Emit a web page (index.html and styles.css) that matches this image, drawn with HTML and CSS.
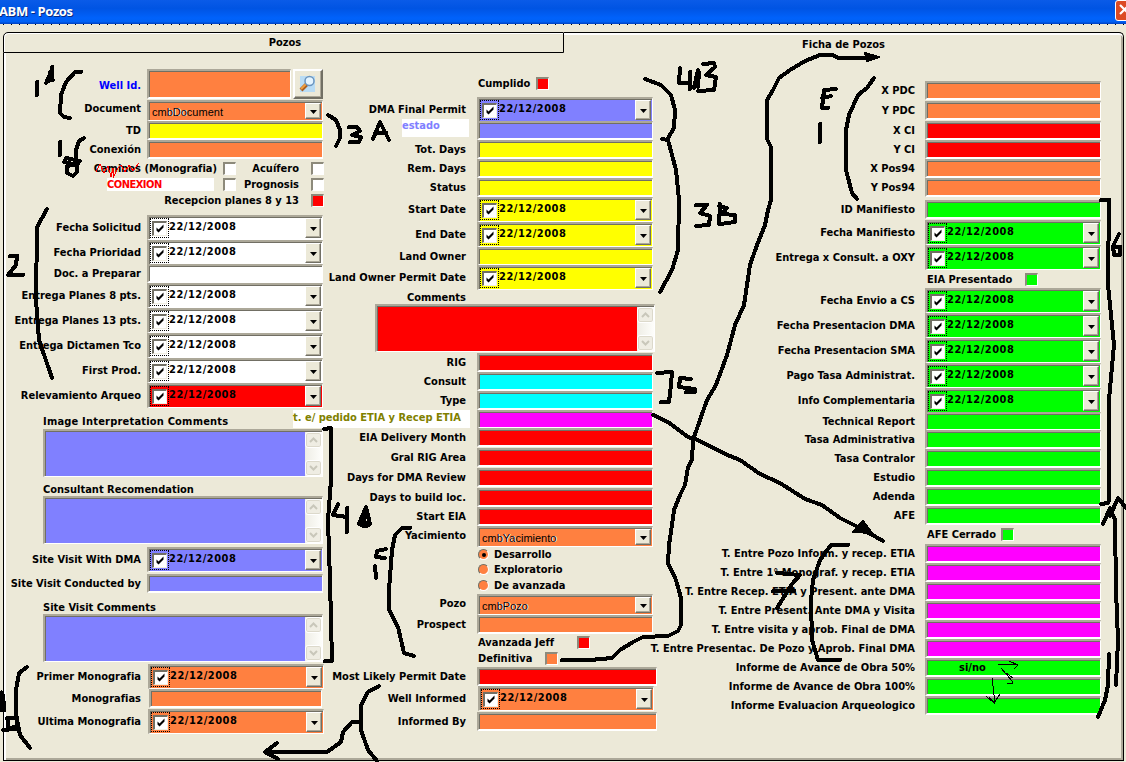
FILE: index.html
```html
<!DOCTYPE html>
<html lang="es">
<head>
<meta charset="utf-8">
<title>ABM - Pozos</title>
<link rel="stylesheet" href="styles.css">
</head>
<body>
<header class="titlebar"><h1>ABM - Pozos</h1><button class="close" aria-label="Cerrar"><svg width="12" height="12" viewBox="0 0 12 12"><path d="M1 1l9 9M10 1l-9 9" stroke="#fff" stroke-width="2.2"/></svg></button></header>
<div class="grid-dots"></div>
<nav class="tabs"><span class="tab back">Pozos</span><span class="tab front">Ficha de Pozos</span></nav>
<main class="sheet" id="sheet"></main>

<svg class="ink" width="1126" height="762" viewBox="0 0 1126 762" aria-hidden="true">
<g class="pen">
<path d="M37 82V95M52 67V77L46 83M49 76L47 81L53 80M50 72V80M81 72H75L66 82L61 95L60 113L64 117L70 118"/>
<path d="M60 142V155M84 138L79 141L76 150V161M80 161L66 158L64 162L77 165V172L73 176L67 173V166L78 164"/>
<path d="M328 115L336 120L340 130V138L336 146M349 127L357 127L360 131L352 135L361 137L359 142L350 142M373 139L380 122L389 140M375 133H386"/>
<path d="M47 209L37 227L36 300L39 340L52 378M10 256H17L16 265L8 275H23"/>
<path d="M324 429L331 428L331 480L328 520L330 580L332 661H325M338 504L333 515L347 517M347 508V532M366 507L359 524Q365 528 370 524L366 507M366 514L363 523H368"/>
<path d="M27 667L19 673L16 690V715L20 735L30 748M7 718H17V727L8 728V719M3 730L16 729"/>
<path d="M379 686L368 692L361 705V730L368 750L377 761M361 722H352L343 732L341 742L327 752H268M277 743L265 752L278 759"/>
<path d="M645 79L661 85L671 95L675 110L674 128L668 138M662 139L668 140L676 170L679 200L678 250L672 270L660 292"/>
<path d="M680 68L679 83H689M690 72V89M698 70L694 88M699 72L698 87M703 64L714 63L715 67L706 75L716 77L714 90L698 91"/>
<path d="M696 205H707L700 213L710 216L709 225L696 226M720 204L719 224M719 206L727 208L722 214L735 215V222L720 224"/>
<path d="M657 373L672 372L671 385L669 402H661M691 379L680 378L679 387L695 389V392H686"/>
<path d="M653 415L668 422L688 437L698 440L725 454L740 460L760 474L780 483L805 499L822 505L840 518L860 528L883 541"/>
<path d="M562 660H590L612 658L620 650L633 642L643 637L668 636L678 631L681 625V598L676 580L668 563L669 545L672 525L674 510L680 495L685 485L688 467L692 460L693 440L700 420L707 400L716 385L727 355L735 325L744 305L747 285L750 265L757 245L765 225L768 210L771 200V147L767 139V100L773 90L779 78L790 70L805 61L820 55H833L838 58H865"/>
<path d="M836 89L824 90L822 108H828M822 98L831 96M820 124V142M874 78L867 88L858 95L849 115L846 130V170L852 193L857 199"/>
<path d="M1101 200H1109L1108 285L1114 345L1109 400V500L1108 503L1101 504M1119 234L1113 246L1114 255H1120V247H1114"/>
<path d="M1103 524L1110 508L1115 520L1116 590L1118 640L1116 685M1110 516L1114 507L1118 498L1126 508M1109 654L1108 685L1105 700L1098 717"/>
<path d="M386 549L377 551L376 557L385 558M375 566L376 578M410 528H402L395 535L392 550L389 590V610L398 627L404 653L414 656"/>
<path d="M848 545L831 545L820 560L813 580L811 600L812 640L818 660H840M777 573L800 575L792 584L777 608M773 591H794"/>
<path class="solid" d="M853 532L863 521L872 533ZM865 53L879 57L867 61Z"/>
<path class="thick" d="M1 694L3 709"/>
</g>
<path class="thin" d="M998 664L1017 665M1009 661L1018 665L1014 669M1001 668L1012 681V683H1007M1006 673L1013 678M992 678L995 703M986 696L994 703L1000 694M989 697L995 704"/>
<path class="scribble" d="M96 172L100 164L104 173L108 166L111 177L113 168V178L118 168L121 165L125 172L129 165L133 171L139 163"/>
</svg>
<script src="form.js"></script>
</body>
</html>
```

FILE: styles.css
```css
* { box-sizing: border-box; }
body { margin: 0; width: 1126px; height: 762px; overflow: hidden; position: relative; background: #ece9d8; color: #000; font: bold 11px "DejaVu Sans Condensed", "DejaVu Sans", sans-serif; font-stretch: condensed; }
.titlebar { height: 24px; display: flex; align-items: center; justify-content: space-between; overflow: hidden; background: linear-gradient(#0a5be8 0, #0054e3 35%, #0062fb 75%, #0061f5 90%, #0040c0 100%); }
.titlebar h1 { margin: -2px 0 0 -1px; color: #fff; font: bold 13px "Open Sans", sans-serif; letter-spacing: -.4px; text-shadow: 1px 1px #0a2a80; }
.close { flex: none; width: 21px; height: 21px; margin: -4px -10px 0 0; padding: 0 0 0 3px; border: 1px solid #fff; border-radius: 3px; background: #dc4b24; display: flex; align-items: center; }
.grid-dots { height: 8px; background: repeating-linear-gradient(90deg, transparent 0 3px, #000 3px 4px, transparent 4px 8px) 0 0 / 100% 1px no-repeat; }
.tabs { display: flex; height: 21px; margin: 0 2px 0 3px; }
.tab { display: flex; align-items: center; justify-content: center; }
.back { width: 561px; border: 1px solid #000; border-radius: 5px 1px 0 0; box-shadow: inset 1px 1px #fff; padding-left: 3px; }
.front { flex: 1; border-top: 1px solid #000; border-right: 1px solid #000; box-shadow: inset 0 2px #fff, inset -2px 0 #aca899; border-radius: 0 5px 0 0; padding-top: 3px; }
.sheet { display: flex; height: 708px; margin: 0 2px 0 3px; border: 1px solid #000; border-top: 0; box-shadow: inset 2px 0 #fff, inset -2px -2px #aca899; }
.col { display: grid; flex: none; align-content: start; }
.col-a { width: 320px; margin-top: 16px; grid-template-rows: 31px 21px 19px 22px 16px 16px 21px 25px 24px 19px 25px 25px 25px 25px 31px 15px 53px 14px 51px 27px 26px 14px 50px 25px 20px 25px; }
.col-b { width: 335px; margin-top: 24px; grid-template-rows: 20px 24px 19px 19px 19px 19px 25px 25px 18px 25px 14px 49px 19px 19px 19px 18px 20px 20px 20px 19px 19px 22px 15px 16px 15px 21px 21px 16px 15px 19px 26px 20px; }
.col-c { width: 448px; margin-top: 28px; margin-left: -5px; grid-template-rows: 20px 20px 19px 19px 19px 22px 20px 25px 28px 15px 25px 25px 25px 25px 24px 18px 19px 19px 19px 19px 22px 16px 19px 19px 19px 19px 19px 19px 19px 19px 20px; }
.row { display: flex; align-items: flex-start; white-space: nowrap; min-width: 0; }
.label { flex: none; display: flex; justify-content: flex-end; align-items: center; height: 19px; }
.col-a .label { width: 143px; padding-right: 6px; }
.col-b .label { width: 153px; padding-right: 11px; }
.col-c .label { width: 271px; padding-right: 10px; }
.row.r-date .label { height: 24px; }
.row.r-combo .label { height: 17px; }
.row.r-tall .label { height: 33px; color: #00f; }
.field { flex: none; width: 176px; height: 19px; border: 2px solid; border-width: 2px 1px 2px 2px; border-color: #aca899 #fff #fff #aca899; box-shadow: inset 1px 1px #716f64; display: flex; }
.tall { width: 144px; height: 30px; margin-right: 2px; }
.date, .combo { border-bottom-width: 1px; }
.date { height: 25px; padding: 1px 1px 1px 0; }
.combo { height: 21px; padding: 1px 1px 1px 3px; }
.nudge { margin-left: 1px; }
.short { width: 173px; margin-left: 2px; }
.wide { width: 180px; }
.orange { background: #ff8040; } .yellow { background: #ff0; } .red { background: #f00; } .white { background: #fff; }
.blue { background: #8080ff; } .cyan { background: #0ff; } .pink { background: #f0f; } .green { background: #0f0; }
.tick { flex: none; width: 19px; height: 20px; margin-left: 1px; border: 1px dotted #000; display: flex; padding: 2px 0 0 1px; }
.tick svg { border: 1px solid; border-width: 2px 1px 1px 2px; border-color: #716f64 #f1efe2 #f1efe2 #716f64; background: #fff; }
.value { flex: 1; line-height: 18px; }
.date .value { letter-spacing: .5px; }
.combo .value { font: 11px/19px "Liberation Sans", sans-serif; font-stretch: normal; }
.halo { text-shadow: 1px 0 #fff; }
.drop { flex: none; width: 16px; height: 100%; background: #ece9d8; border: 1px solid; border-color: #fff #716f64 #716f64 #fff; box-shadow: inset -1px -1px #aca899; display: flex; align-items: center; justify-content: center; padding-top: 1px; }
.search { width: 30px; height: 30px; padding: 0; background: #ece9d8; border: 2px solid; border-color: #fff #716f64 #716f64 #fff; box-shadow: inset -1px -1px #aca899; display: flex; align-items: center; justify-content: center; }
.area { flex: none; width: 280px; height: 48px; border: 2px solid; border-width: 2px 1px 1px 2px; border-color: #aca899 #fff #fff #aca899; box-shadow: inset 1px 1px #716f64; display: flex; justify-content: flex-end; padding-top: 1px; }
.col-a .area { margin-left: 39px; }
.col-b .area { margin-left: 51px; }
.scroll { width: 17px; display: flex; flex-direction: column; justify-content: space-between; background: linear-gradient(90deg, #eeede5, #fefefb); }
.scroll i { height: 16px; border: 1px solid #fff; box-shadow: inset 0 0 0 1px #dcd9cb; border-radius: 3px; background: #efede3; display: flex; align-items: center; justify-content: center; }
.box { flex: none; width: 13px; height: 13px; border: 1px solid; border-width: 2px 1px 1px 2px; border-color: #8d8a7b #fff #fff #8d8a7b; }
.head { align-items: center; height: 15px; padding-left: 39px; }
.col-a .image { letter-spacing: .2px; }
.head-b .label { height: 15px; }
.checks { justify-content: flex-end; align-items: center; height: 13px; gap: 6px; }
.checks .box:last-child { margin-left: 6px; }
.checks .second { width: 57px; text-align: right; }
.solo { justify-content: flex-start; align-items: center; height: 13px; }
.col-b .solo { padding-left: 154px; }
.col-c .solo { padding-left: 273px; }
.solo .box { margin-left: 13px; }
.cumplido .box { margin-left: 6px; }
.jeff .box { margin-left: 23px; }
.afe .box { margin-left: 5px; }
.radio { width: 11px; height: 11px; border-radius: 50%; border: 1px solid; border-color: #716f64 #fff #fff #716f64; display: flex; align-items: center; justify-content: center; margin-right: 5px; }
.on::after { content: ""; width: 4px; height: 4px; border-radius: 50%; background: #000; }
.patch { background: #fff; flex: none; }
.conexion { width: 107px; height: 13px; line-height: 14px; color: #f00; margin-right: 3px; letter-spacing: -.5px; }
.estado { width: 67px; height: 18px; line-height: 14px; margin: -2px -3px 0 0; color: #8080ff; align-self: flex-start; }
.etia { width: 177px; height: 18px; line-height: 15px; color: #808000; margin-right: -4px; align-self: flex-start; }
.answer { padding-left: 32px; line-height: 16px; }
.ink { position: absolute; left: 0; top: 0; }
.ink path { fill: none; stroke: #000; shape-rendering: crispEdges; }
.pen path { stroke-width: 4; stroke-linecap: round; stroke-linejoin: round; }
.pen .solid { fill: #000; stroke-width: 2; }
.pen .thick { stroke-width: 7; }
.ink .thin { stroke-width: 1; }
.ink .scribble { stroke: #f00; stroke-width: 1; }
```

FILE: form.js
```js
const arrow = '<svg width="7" height="4"><path d="M0 0h7L3.500 4z"/></svg>';
const check = '<svg width="15" height="15" viewBox="0 0 12 12"><path d="M2.500 4.500v3l2 2 5-5v-3l-5 5z"/></svg>';
const up = '<svg width="9" height="6"><path d="M1 5l3.500-3.500L8 5" fill="none" stroke="#c9c7ba" stroke-width="2"/></svg>';
const down = '<svg width="9" height="6"><path d="M1 1l3.500 3.500L8 1" fill="none" stroke="#c9c7ba" stroke-width="2"/></svg>';
const lens = '<svg width="18" height="18"><rect x="1" y="1" width="15" height="16" fill="#b9dcf5"/><path d="M2 15l6-6" stroke="#a85c20" stroke-width="4"/><path d="M2 14l5-5" stroke="#f0a040" stroke-width="2"/><circle cx="10.500" cy="6" r="4.500" fill="#e4f4ff" stroke="#6b94bd" stroke-width="1.500"/></svg>';

const row = (label, body, cls = '') => `<div class="row ${cls}"><span class="label">${label}</span>${body}</div>`;
const line = (label, color, extra = '', text = '') => row(label, `<span class="field ${color} ${extra}">${text}</span>`);
const date = (label, color, extra = '') => row(label, `<span class="field date ${color} ${extra}"><span class="tick">${check}</span><span class="value">22/12/2008</span><span class="drop">${arrow}</span></span>`, 'r-date');
const combo = (label, text, cls = '') => row(label, `<span class="field combo orange"><span class="value">${text}</span><span class="drop">${arrow}</span></span>`, cls);
const area = color => `<div class="row"><span class="area ${color}"><span class="scroll"><i>${up}</i><i>${down}</i></span></span></div>`;
const head = (text, cls = '') => `<div class="row head ${cls}">${text}</div>`;
const box = color => `<span class="box ${color}"></span>`;
const solo = (text, color, cls = '') => `<div class="row solo ${cls}"><span>${text}</span>${box(color)}</div>`;
const radio = (text, on = '') => `<div class="row solo"><span class="radio orange ${on}"></span>${text}</div>`;
const lines = (labels, color) => labels.map(t => line(t, color)).join('');
const dates = (labels, color) => labels.map(t => date(t, color)).join('');

const left = [
  row('Well Id.', `<span class="field tall orange"></span><button class="search" aria-label="Buscar">${lens}</button>`, 'r-tall'),
  combo('Document', 'cm<span class="halo">bDo</span>cument', 'r-combo'),
  line('TD', 'yellow'), line('Conexión', 'orange'),
  `<div class="row checks"><span>Caminos (Monografia)</span>${box('white')}<span class="second">Acuífero</span>${box('white')}</div>`,
  `<div class="row checks"><span class="patch conexion">CONEXION</span>${box('white')}<span class="second">Prognosis</span>${box('white')}</div>`,
  `<div class="row checks"><span>Recepcion planes 8 y 13</span>${box('red')}</div>`,
  dates(['Fecha Solicitud', 'Fecha Prioridad'], 'white'), line('Doc. a Preparar', 'white'),
  dates(['Entrega Planes 8 pts.', 'Entrega Planes 13 pts.', 'Entrega Dictamen Tco', 'First Prod.'], 'white'),
  date('Relevamiento Arqueo', 'red'),
  head('Image Interpretation Comments', 'image'), area('blue'),
  head('Consultant Recomendation'), area('blue'),
  date('Site Visit With DMA', 'blue'), line('Site Visit Conducted by', 'blue'),
  head('Site Visit Comments'), area('blue'),
  date('Primer Monografia', 'orange', 'nudge'), line('Monografias', 'orange', 'short'), date('Ultima Monografia', 'orange', 'nudge')
];
const middle = [
  solo('Cumplido', 'red', 'cumplido'), date('DMA Final Permit', 'blue'),
  line('<span class="patch estado">estado</span>', 'blue'),
  lines(['Tot. Days', 'Rem. Days', 'Status'], 'yellow'),
  dates(['Start Date', 'End Date'], 'yellow'), line('Land Owner', 'yellow'), date('Land Owner Permit Date', 'yellow'),
  row('Comments', '', 'head-b'), area('red'),
  line('RIG', 'red'), lines(['Consult', 'Type'], 'cyan'),
  line('<span class="patch etia">t. e/ pedido ETIA y Recep ETIA</span>', 'pink'),
  lines(['EIA Delivery Month', 'Gral RIG Area', 'Days for DMA Review', 'Days to build loc.', 'Start EIA'], 'red'),
  combo('Yacimiento', 'cm<span class="halo">bYa</span>cimient<span class="halo">o</span>'),
  radio('Desarrollo', 'on'), radio('Exploratorio'), radio('De avanzada'),
  combo('Pozo', 'cm<span class="halo">bPozo</span>'), line('Prospect', 'orange'),
  solo('Avanzada Jeff', 'red', 'jeff'), solo('Definitiva', 'orange'),
  line('Most Likely Permit Date', 'red', 'wide'), date('Well Informed', 'orange', 'nudge'), line('Informed By', 'orange', 'wide')
];
const right = [
  lines(['X PDC', 'Y PDC'], 'orange'), lines(['X CI', 'Y CI'], 'red'), lines(['X Pos94', 'Y Pos94'], 'orange'),
  line('ID Manifiesto', 'green'), dates(['Fecha Manifiesto', 'Entrega x Consult. a OXY'], 'green'),
  solo('EIA Presentado', 'green'),
  dates(['Fecha Envio a CS', 'Fecha Presentacion DMA', 'Fecha Presentacion SMA', 'Pago Tasa Administrat.', 'Info Complementaria'], 'green'),
  lines(['Technical Report', 'Tasa Administrativa', 'Tasa Contralor', 'Estudio', 'Adenda', 'AFE'], 'green'),
  solo('AFE Cerrado', 'green', 'afe'),
  lines(['T. Entre Pozo Inform. y recep. ETIA', 'T. Entre 1° Monograf. y recep. ETIA', 'T. Entre Recep. ETIA y Present. ante DMA', 'T. Entre Present. Ante DMA y Visita', 'T. Entre visita y aprob. Final de DMA', 'T. Entre Presentac. De Pozo y Aprob. Final DMA'], 'pink'),
  line('Informe de Avance de Obra 50%', 'green', 'answer', 'si/no'),
  lines(['Informe de Avance de Obra 100%', 'Informe Evaluacion Arqueologico'], 'green')
];
document.getElementById('sheet').innerHTML =
  [['a', left], ['b', middle], ['c', right]].map(([k, rows]) => `<section class="col col-${k}">${rows.join('')}</section>`).join('');
```
